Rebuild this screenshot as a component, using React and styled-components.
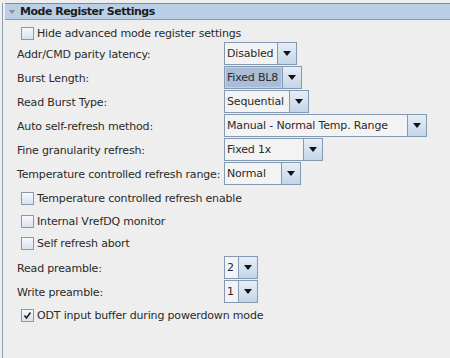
import React from "react";
import styled, { createGlobalStyle } from "styled-components";

const Global = createGlobalStyle`
  html, body { margin: 0; padding: 0; background: #eeeeee; }
  body { font-family: "DejaVu Sans", sans-serif; font-size: 11px; color: #2a2a2a; letter-spacing: -0.17px; }
`;

const Page = styled.div`
  width: 450px;
  height: 358px;
  box-sizing: border-box;
  padding-left: 2px;
  padding-top: 3px;
  background: #eeeeee;
  overflow: hidden;
`;

const Panel = styled.div`
  border-left: 1px solid #8d9db3;
  height: 100%;
  padding-left: 2px;
`;

const Header = styled.div`
  height: 15px;
  border-top: 1px solid #7d8a97;
  border-bottom: 1px solid #8d9aa8;
  background: #b9cfe6;
  display: flex;
  align-items: center;
  gap: 5px;
  padding-left: 4px;
  font-weight: bold;
  font-size: 11px;
  letter-spacing: -0.5px;
  color: #1c1c1c;
`;

const Tri = styled.span`
  width: 0;
  height: 0;
  border-left: 3px solid transparent;
  border-right: 3px solid transparent;
  border-top: 4px solid #8a8f96;
  margin-top: 1px;
`;

const Body = styled.div`
  display: flex;
  flex-direction: column;
`;

const Row = styled.div`
  height: ${(p) => p.$h}px;
  display: flex;
  align-items: ${(p) => (p.$top ? "flex-start" : "center")};
  padding-top: ${(p) => p.$pt || 0}px;
  box-sizing: border-box;
`;

const Label = styled.div`
  width: 207px;
  padding-left: 12px;
  padding-top: 1px;
  flex: none;
  line-height: 23px;
  white-space: nowrap;
`;

const CheckWrap = styled.label`
  display: flex;
  align-items: center;
  gap: 3px;
  padding-left: 16px;
`;

const Box = styled.span`
  width: 11px;
  height: 11px;
  border: 1px solid #8699b0;
  background: linear-gradient(#f7f9fc, #d7e1ec);
  display: inline-flex;
  align-items: center;
  justify-content: center;
`;

const Combo = styled.div`
  width: ${(p) => p.$w}px;
  height: 23px;
  box-sizing: border-box;
  border: 1px solid #8499b2;
  display: flex;
  background: #f3f3f3;
`;

const ComboText = styled.div`
  flex: 1;
  padding-left: 2px;
  line-height: 21px;
  white-space: nowrap;
  overflow: hidden;
  background: ${(p) => (p.$focus ? "#a9bed6" : "#f3f3f3")};
  box-shadow: ${(p) => (p.$focus ? "inset 0 0 0 1px #c3d3e4" : "none")};
`;

const ComboBtn = styled.div`
  width: 18px;
  border-left: 1px solid #8499b2;
  background: linear-gradient(#e6eef7, #c4d5e8);
  display: flex;
  align-items: center;
  justify-content: center;
`;

const Arrow = styled.span`
  width: 0;
  height: 0;
  border-left: 4.5px solid transparent;
  border-right: 4.5px solid transparent;
  border-top: 5px solid #111;
`;

function Check({ checked, children }) {
  return (
    <CheckWrap>
      <Box>
        {checked && (
          <svg width="9" height="9" viewBox="0 0 9 9">
            <path d="M1.5 4.5 L3.5 7 L7.5 1.5" stroke="#222" strokeWidth="1.6" fill="none" />
          </svg>
        )}
      </Box>
      <span>{children}</span>
    </CheckWrap>
  );
}

function Select({ w, value, focus }) {
  return (
    <Combo $w={w}>
      <ComboText $focus={focus}>{value}</ComboText>
      <ComboBtn>
        <Arrow />
      </ComboBtn>
    </Combo>
  );
}

function Field({ label, w, value, focus, h = 24 }) {
  return (
    <Row $h={h} $top>
      <Label>{label}</Label>
      <Select w={w} value={value} focus={focus} />
    </Row>
  );
}

export default function App() {
  return (
    <>
      <Global />
      <Page>
        <Panel>
          <Header>
            <Tri />
            Mode Register Settings
          </Header>
          <Body>
            <Row $h={22} $pt={5}>
              <Check>Hide advanced mode register settings</Check>
            </Row>
            <Field label="Addr/CMD parity latency:" w={73} value="Disabled" />
            <Field label="Burst Length:" w={78} value="Fixed BL8" focus />
            <Field label="Read Burst Type:" w={85} value="Sequential" />
            <Field label="Auto self-refresh method:" w={203} value="Manual - Normal Temp. Range" />
            <Field label="Fine granularity refresh:" w={99} value="Fixed 1x" />
            <Field label="Temperature controlled refresh range:" w={77} value="Normal" />
            <Row $h={23} $pt={2}>
              <Check>Temperature controlled refresh enable</Check>
            </Row>
            <Row $h={23} $pt={2}>
              <Check>Internal VrefDQ monitor</Check>
            </Row>
            <Row $h={22} $pt={1}>
              <Check>Self refresh abort</Check>
            </Row>
            <Row $h={2} />
            <Field label="Read preamble:" w={34} value="2" />
            <Field label="Write preamble:" w={34} value="1" />
            <Row $h={22} $pt={1}>
              <Check checked>ODT input buffer during powerdown mode</Check>
            </Row>
          </Body>
        </Panel>
      </Page>
    </>
  );
}
